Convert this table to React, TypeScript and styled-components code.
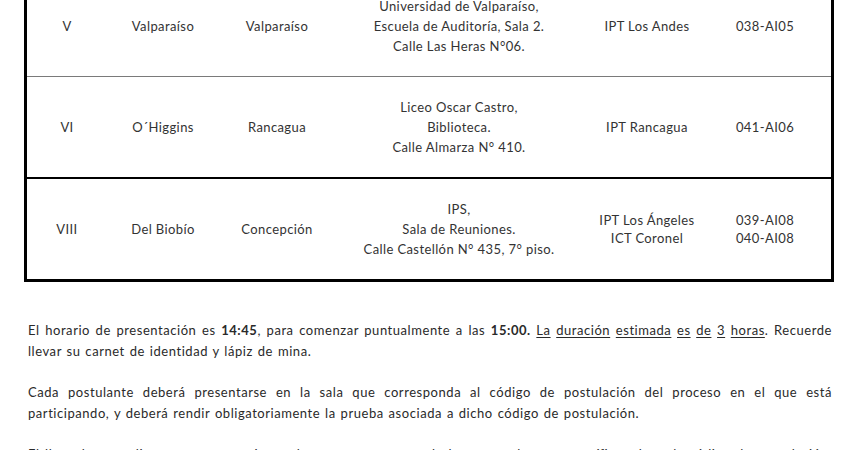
import styled, { createGlobalStyle } from 'styled-components'

type Row = {
  region: string
  name: string
  city: string
  place: string[]
  institutes: string[]
  codes: string[]
  divider: 'light' | 'dark' | 'none'
}

const rows: Row[] = [
  {
    region: 'V',
    name: 'Valparaíso',
    city: 'Valparaíso',
    place: ['Universidad de Valparaíso,', 'Escuela de Auditoría, Sala 2.', 'Calle Las Heras N°06.'],
    institutes: ['IPT Los Andes'],
    codes: ['038-AI05'],
    divider: 'light',
  },
  {
    region: 'VI',
    name: 'O´Higgins',
    city: 'Rancagua',
    place: ['Liceo Oscar Castro,', 'Biblioteca.', 'Calle Almarza N° 410.'],
    institutes: ['IPT Rancagua'],
    codes: ['041-AI06'],
    divider: 'dark',
  },
  {
    region: 'VIII',
    name: 'Del Biobío',
    city: 'Concepción',
    place: ['IPS,', 'Sala de Reuniones.', 'Calle Castellón N° 435, 7° piso.'],
    institutes: ['IPT Los Ángeles', 'ICT Coronel'],
    codes: ['039-AI08', '040-AI08'],
    divider: 'none',
  },
]

const App = () => {
  return (
    <Page>
      <GlobalStyle />
      <Table>
        <colgroup>
          <col style={{ width: 80 }} />
          <col style={{ width: 112 }} />
          <col style={{ width: 116 }} />
          <col style={{ width: 248 }} />
          <col style={{ width: 128 }} />
          <col />
        </colgroup>
        <tbody>
          {rows.map(row => (
            <tr key={row.region}>
              <Cell $divider={row.divider}>{row.region}</Cell>
              <Cell $divider={row.divider}>{row.name}</Cell>
              <Cell $divider={row.divider}>{row.city}</Cell>
              <Cell $divider={row.divider}>
                {row.place.map(line => (
                  <Line key={line}>{line}</Line>
                ))}
              </Cell>
              <Cell $divider={row.divider}>
                {row.institutes.map(line => (
                  <Line key={line} $tight>
                    {line}
                  </Line>
                ))}
              </Cell>
              <CodeCell $divider={row.divider}>
                {row.codes.map(line => (
                  <Line key={line} $tight>
                    {line}
                  </Line>
                ))}
              </CodeCell>
            </tr>
          ))}
        </tbody>
      </Table>

      <Body>
        <Paragraph>
          El horario de presentación es <b>14:45</b>, para comenzar puntualmente a las <b>15:00.</b>{' '}
          <u>La</u> <u>duración</u> <u>estimada</u> <u>es</u> <u>de</u> <u>3</u> <u>horas</u>. Recuerde llevar su
          carnet de identidad y lápiz de mina.
        </Paragraph>
        <Paragraph>
          Cada postulante deberá presentarse en la sala que corresponda al código de postulación del proceso en el que
          está participando, y deberá rendir obligatoriamente la prueba asociada a dicho código de postulación.
        </Paragraph>
        <Paragraph>
          El llamado a rendir se encuentra sujeto a la entrega oportuna de los antecedentes específicos de cada código
          de postulación, por lo que se sugiere revisar la información con anticipación.
        </Paragraph>
      </Body>
    </Page>
  )
}

export default App

const GlobalStyle = createGlobalStyle`
  html, body {
    margin: 0;
    padding: 0;
    background: #fff;
    overflow: hidden;
  }
  body {
    font-family: Lato, "Liberation Sans", sans-serif;
    font-size: 13px;
    color: #2a2a2a;
  }
`

const Page = styled.div`
  width: 860px;
  height: 450px;
  overflow: hidden;
`

const Table = styled.table`
  margin: -27px 0 0 24px;
  width: 810px;
  table-layout: fixed;
  border: 3px solid #000;
  border-collapse: separate;
  border-spacing: 0;
  color: #333;
  letter-spacing: 0.4px;
`

const Cell = styled.td<{ $divider: 'light' | 'dark' | 'none' }>`
  padding: 20px 0;
  text-align: center;
  vertical-align: middle;
  line-height: 20px;
  white-space: nowrap;
  border-bottom: ${props =>
    props.$divider === 'light' ? '1px solid #7a7a7a' : props.$divider === 'dark' ? '2px solid #000' : 'none'};
`

const CodeCell = styled(Cell)`
  padding-right: 12px;
`

const Line = styled.div<{ $tight?: boolean }>`
  line-height: ${props => (props.$tight ? '18px' : '20px')};
`

const Body = styled.div`
  padding: 38px 28px 0 28px;
`

const Paragraph = styled.p`
  margin: 0 0 20px 0;
  line-height: 21px;
  text-align: justify;
  letter-spacing: 0.55px;
  word-spacing: 1px;

  u {
    text-underline-offset: 2px;
  }
`
